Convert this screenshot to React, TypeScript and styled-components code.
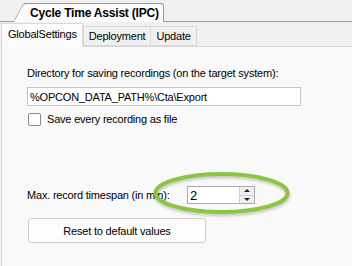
import React from "react";
import styled, { createGlobalStyle } from "styled-components";

const GlobalStyle = createGlobalStyle`
  html, body {
    margin: 0;
    padding: 0;
    background: #f0f0f0;
  }
  body {
    font-family: "Liberation Sans", Arial, sans-serif;
    font-size: 11px;
    letter-spacing: -0.2px;
    color: #000;
  }
`;

const Window = styled.div`
  position: relative;
  width: 352px;
  height: 266px;
  overflow: hidden;
  background: #f0f0f0;
`;

const DocStrip = styled.div`
  height: 22px;
  display: flex;
  align-items: flex-end;
  padding-left: 24px;
  border-bottom: 1px solid #8e9bb0;
  box-sizing: border-box;
`;

const DocTab = styled.div`
  position: relative;
  height: 19px;
  padding: 0 4px 0 6px;
  display: flex;
  align-items: center;
  white-space: nowrap;
  background: #fbfbfb;
  border-top: 1px solid #9a9a9a;
  border-right: 1px solid #9a9a9a;
  border-top-right-radius: 3px;
  font-weight: bold;
  font-size: 12px;
  letter-spacing: -0.2px;
  box-sizing: border-box;
  margin-bottom: -1px;

  &::before {
    content: "";
    position: absolute;
    left: -6px;
    top: -1px;
    bottom: 0;
    width: 12px;
    background: #fbfbfb;
    border-left: 1px solid #9a9a9a;
    border-top: 1px solid #9a9a9a;
    border-top-left-radius: 4px;
    transform: skewX(-28deg);
    z-index: 0;
  }

  span {
    position: relative;
    z-index: 1;
  }
`;

const TabRow = styled.div`
  display: flex;
  align-items: flex-end;
  height: 24px;
  padding-left: 1px;
  white-space: nowrap;
`;

const Tab = styled.div<{ $active?: boolean }>`
  height: ${(p) => (p.$active ? 24 : 20)}px;
  box-sizing: border-box;
  padding: 0 ${(p) => (p.$active ? 5 : 5)}px;
  padding-left: ${(p) => (p.$active ? 6 : 5)}px;
  display: flex;
  align-items: center;
  background: ${(p) => (p.$active ? "#fbfbfb" : "#f0f0f0")};
  border: 1px solid #d9d9d9;
  border-bottom: ${(p) => (p.$active ? "none" : "1px solid #d9d9d9")};
  margin-right: ${(p) => (p.$active ? 0 : -1)}px;
  margin-bottom: ${(p) => (p.$active ? -1 : 0)}px;
  position: relative;
  z-index: ${(p) => (p.$active ? 1 : 0)};
  padding-bottom: ${(p) => (p.$active ? 4 : 0)}px;
`;

const Panel = styled.div`
  position: relative;
  background: #f9f9f9;
  border: 1px solid #d9d9d9;
  border-right: none;
  height: 230px;
  margin-left: 1px;
  padding: 19px 0 0 25px;
  box-sizing: border-box;
`;

const FieldLabel = styled.div`
  line-height: 14px;
  height: 14px;
  white-space: nowrap;
`;

const TextInput = styled.div`
  margin-top: 7px;
  width: 274px;
  height: 19px;
  box-sizing: border-box;
  border: 1px solid #c4c4c4;
  background: #fff;
  padding-left: 2px;
  display: flex;
  align-items: center;
`;

const CheckRow = styled.label`
  margin-top: 6px;
  display: flex;
  align-items: center;
  gap: 6px;
  height: 14px;
`;

const Box = styled.span`
  width: 11px;
  height: 11px;
  border: 1px solid #8a8a8a;
  border-radius: 2px;
  background: #fff;
  margin-left: 1px;
`;

const SpinRow = styled.div`
  margin-top: 60px;
  display: grid;
  grid-template-columns: 160px auto;
  align-items: center;
  white-space: nowrap;
`;

const SpinBox = styled.div`
  width: 68px;
  height: 18px;
  box-sizing: border-box;
  border: 1px solid #aaaaaa;
  background: #fff;
  display: flex;
  align-items: stretch;
`;

const SpinValue = styled.div`
  flex: 1;
  padding-left: 2px;
  display: flex;
  align-items: center;
  font-size: 13px;
`;

const SpinButtons = styled.div`
  width: 14px;
  display: flex;
  flex-direction: column;
  border-left: 1px solid #d0d0d0;
  background: #f0f0f0;
`;

const SpinArrow = styled.div<{ $down?: boolean }>`
  flex: 1;
  display: flex;
  align-items: center;
  justify-content: center;
  border-bottom: ${(p) => (p.$down ? "none" : "1px solid #d0d0d0")};

  &::after {
    content: "";
    border-left: 3px solid transparent;
    border-right: 3px solid transparent;
    ${(p) =>
      p.$down ? "border-top: 3px solid #222;" : "border-bottom: 3px solid #222;"}
  }
`;

const Button = styled.div`
  margin-top: 14px;
  margin-left: 1px;
  width: 178px;
  height: 25px;
  box-sizing: border-box;
  border: 1px solid #cfcfcf;
  border-radius: 3px;
  background: #fdfdfd;
  display: flex;
  align-items: center;
  justify-content: center;
`;

const Highlight = styled.svg`
  position: absolute;
  left: 150px;
  top: 168px;
  pointer-events: none;
`;

export default function App() {
  return (
    <Window>
      <GlobalStyle />
      <DocStrip>
        <DocTab>
          <span>Cycle Time Assist (IPC)</span>
        </DocTab>
      </DocStrip>
      <TabRow>
        <Tab $active>GlobalSettings</Tab>
        <Tab>Deployment</Tab>
        <Tab>Update</Tab>
      </TabRow>
      <Panel>
        <FieldLabel>Directory for saving recordings (on the target system):</FieldLabel>
        <TextInput>%OPCON_DATA_PATH%\Cta\Export</TextInput>
        <CheckRow>
          <Box />
          Save every recording as file
        </CheckRow>
        <SpinRow>
          <span>Max. record timespan (in min):</span>
          <SpinBox>
            <SpinValue>2</SpinValue>
            <SpinButtons>
              <SpinArrow />
              <SpinArrow $down />
            </SpinButtons>
          </SpinBox>
        </SpinRow>
        <Button>Reset to default values</Button>
      </Panel>
      <Highlight width="145" height="52" viewBox="0 0 145 52">
        <defs>
          <filter id="glow" x="-10%" y="-20%" width="120%" height="140%">
            <feGaussianBlur stdDeviation="1.2" />
          </filter>
        </defs>
        <ellipse cx="72" cy="27" rx="66" ry="19" fill="none" stroke="#000" strokeOpacity="0.18" strokeWidth="5" filter="url(#glow)" />
        <ellipse cx="71.5" cy="25" rx="66" ry="19" fill="none" stroke="#8cc63e" strokeWidth="4" />
      </Highlight>
    </Window>
  );
}
